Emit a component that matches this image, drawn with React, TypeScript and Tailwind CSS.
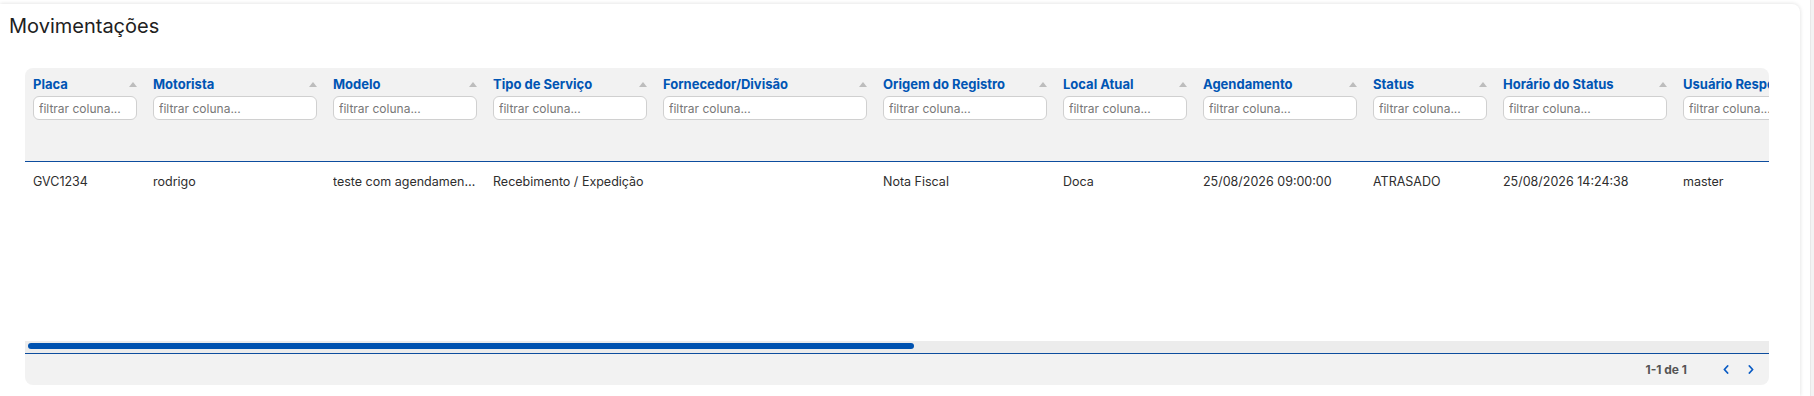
import React from "react";

type Col = { label: string; w: string; value: string };

const cols: Col[] = [
  { label: "Placa", w: "w-[120px]", value: "GVC1234" },
  { label: "Motorista", w: "w-[180px]", value: "rodrigo" },
  { label: "Modelo", w: "w-[160px]", value: "teste com agendamento novo" },
  { label: "Tipo de Serviço", w: "w-[170px]", value: "Recebimento / Expedição" },
  { label: "Fornecedor/Divisão", w: "w-[220px]", value: "" },
  { label: "Origem do Registro", w: "w-[180px]", value: "Nota Fiscal" },
  { label: "Local Atual", w: "w-[140px]", value: "Doca" },
  { label: "Agendamento", w: "w-[170px]", value: "25/08/2026 09:00:00" },
  { label: "Status", w: "w-[130px]", value: "ATRASADO" },
  { label: "Horário do Status", w: "w-[180px]", value: "25/08/2026 14:24:38" },
  { label: "Usuário Responsável", w: "w-[180px]", value: "master" },
  { label: "Transportadora", w: "w-[200px]", value: "" },
  { label: "Placa Carreta", w: "w-[140px]", value: "" },
  { label: "CPF Motorista", w: "w-[160px]", value: "" },
  { label: "Telefone", w: "w-[150px]", value: "" },
  { label: "Nota Fiscal", w: "w-[150px]", value: "" },
  { label: "Observação", w: "w-[240px]", value: "" },
  { label: "Data de Entrada", w: "w-[170px]", value: "" },
  { label: "Data de Saída", w: "w-[170px]", value: "" },
  { label: "Tempo Total", w: "w-[130px]", value: "" },
];

function SortArrow() {
  return (
    <svg width="8" height="5" viewBox="0 0 8 5" className="shrink-0">
      <path d="M4 0 L8 5 L0 5 Z" fill="#bdbdbd" />
    </svg>
  );
}

function Chevron({ dir }: { dir: "left" | "right" }) {
  return (
    <svg width="6" height="9" viewBox="0 0 6 9" fill="none">
      <polyline
        points={dir === "left" ? "4.6,1 1.4,4.5 4.6,8" : "1.4,1 4.6,4.5 1.4,8"}
        stroke="#0b5cc4"
        strokeWidth="1.8"
        strokeLinecap="round"
        strokeLinejoin="round"
      />
    </svg>
  );
}

export default function App() {
  return (
    <div className="flex h-[396px] w-full overflow-hidden bg-white font-['Inter','Noto_Sans',sans-serif]">
      <div className="mt-1 h-[392px] w-[1800px] shrink-0 rounded-tr-lg bg-white pl-[9px] pt-2 shadow-[0_0_4px_rgba(0,0,0,0.14)]">
        <h1 className="text-[20px] leading-7 font-normal text-[#212121]">Movimentações</h1>
        <div className="ml-4 mt-7 w-[1744px] overflow-hidden rounded-lg bg-[#f2f2f2]">
          <div className="overflow-hidden">
            <div className="w-[3411px]">
              <div className="flex h-[94px] border-b border-[#0d4d9e] pl-2 pt-2">
                {cols.map((c) => (
                  <div key={c.label} className={`${c.w} shrink-0 pr-4`}>
                    <div className="flex h-4 items-center justify-between">
                      <span className="whitespace-nowrap text-[13px] leading-4 font-bold text-[#0055b4]">
                        {c.label}
                      </span>
                      <SortArrow />
                    </div>
                    <input
                      placeholder="filtrar coluna..."
                      className="mt-1 block h-6 w-full rounded-md border border-[#d0d0d0] bg-white px-[5px] text-[12px] text-[#333] outline-none placeholder:text-[#777]"
                    />
                  </div>
                ))}
              </div>
              <div className="h-[179px] bg-white">
                <div className="flex h-10 items-center pl-2">
                  {cols.map((c) => (
                    <div key={c.label} className={`${c.w} shrink-0 pr-4`}>
                      <div className="truncate text-[12.5px] leading-5 text-[#2e2e2e]">{c.value}</div>
                    </div>
                  ))}
                </div>
              </div>
            </div>
          </div>
          <div className="h-[13px] border-b border-[#0d4d9e] bg-[#ececec] pt-[2px] pl-[3px]">
            <div className="h-[6px] w-[886px] rounded-full bg-[#0052b0]" />
          </div>
          <div className="flex h-[31px] items-center justify-end pr-[15px]">
            <span className="text-[12px] font-bold text-[#555]">1-1 de 1</span>
            <div className="ml-[36px] flex items-center gap-[19px]">
              <Chevron dir="left" />
              <Chevron dir="right" />
            </div>
          </div>
        </div>
      </div>
      <div className="flex flex-1 justify-end">
        <div className="w-1 border-l border-[#e8e8e8] bg-[#f3f3f3]" />
      </div>
    </div>
  );
}
